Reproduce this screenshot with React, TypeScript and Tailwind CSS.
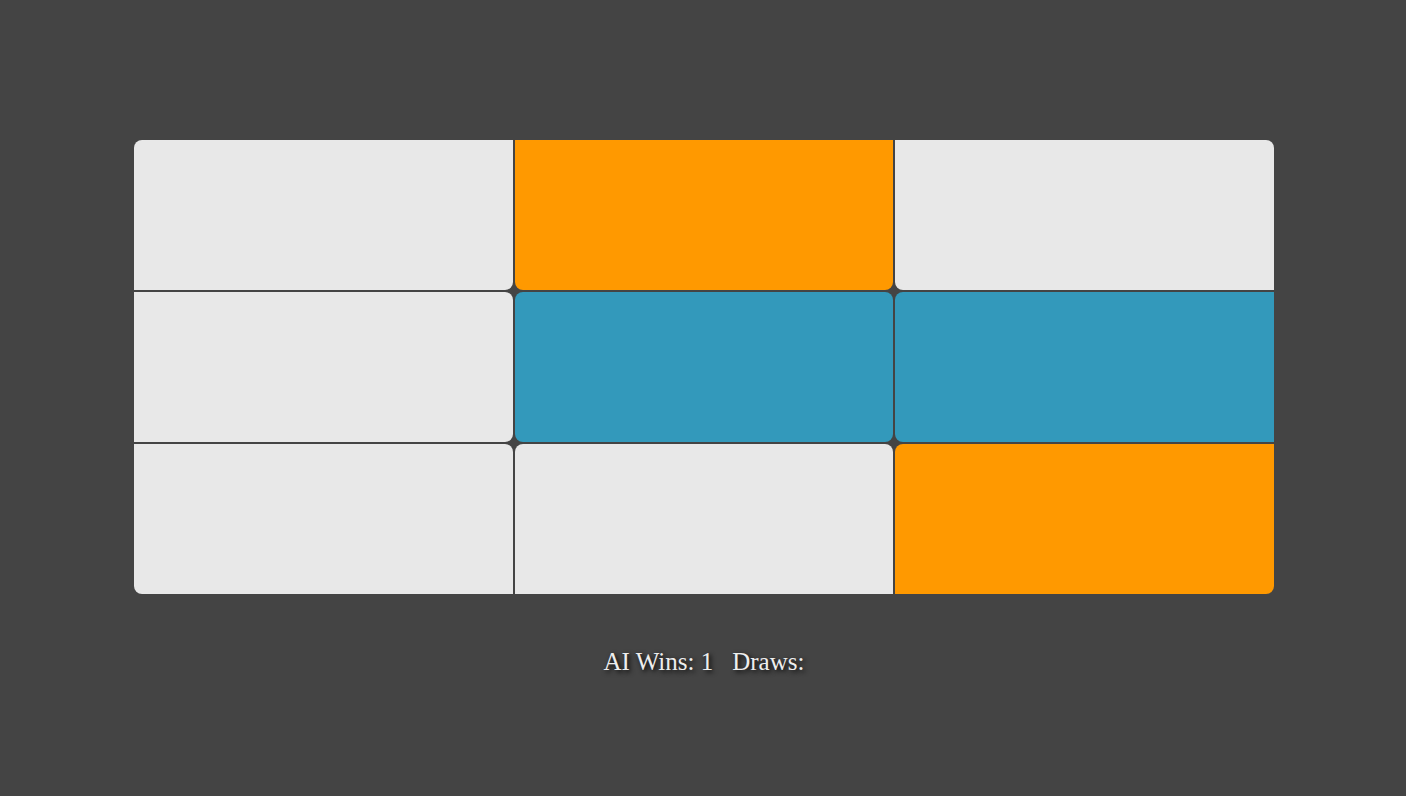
const cells = [
  { color: "bg-[#e8e8e8]", round: "rounded-br-lg" },
  { color: "bg-[#ff9900]", round: "rounded-bl-lg rounded-br-lg" },
  { color: "bg-[#e8e8e8]", round: "rounded-bl-lg" },
  { color: "bg-[#e8e8e8]", round: "rounded-tr-lg rounded-br-lg" },
  { color: "bg-[#3399bb]", round: "rounded-lg" },
  { color: "bg-[#3399bb]", round: "rounded-tl-lg rounded-bl-lg" },
  { color: "bg-[#e8e8e8]", round: "rounded-tr-lg" },
  { color: "bg-[#e8e8e8]", round: "rounded-tl-lg rounded-tr-lg" },
  { color: "bg-[#ff9900]", round: "rounded-tl-lg" },
];

export default function App() {
  return (
    <main className="min-h-screen w-full bg-[#444444] flex flex-col items-center pt-[140px] pl-[2px]">
      <div className="w-[1140px] h-[454px] rounded-lg overflow-hidden grid grid-cols-3 grid-rows-3 gap-[2px]">
        {cells.map((c, i) => (
          <div key={i} className={`${c.color} ${c.round}`} />
        ))}
      </div>

      <div
        className="mt-[49px] text-[25px] text-[#eeeeee] [text-shadow:2px_2px_5px_#000] flex"
        style={{ fontFamily: '"Liberation Serif", "Times New Roman", serif' }}
      >
        <span>AI Wins: 1</span>
        <span className="ml-[19px]">Draws:</span>
      </div>
    </main>
  );
}
